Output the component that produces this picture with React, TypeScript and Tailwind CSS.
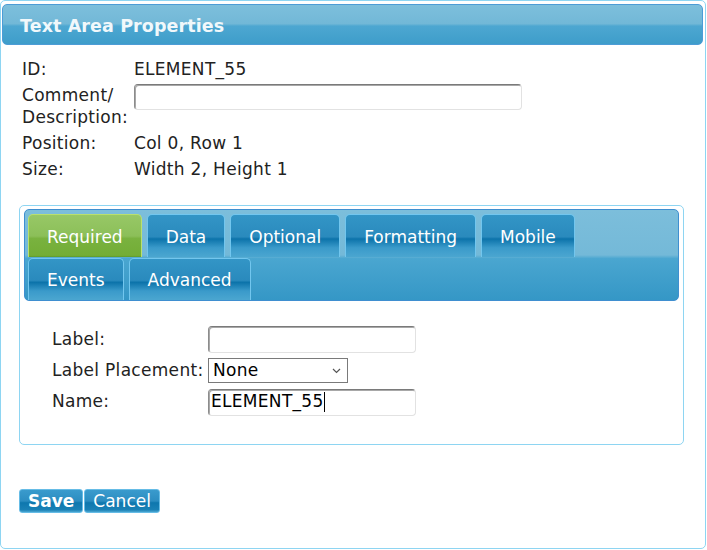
const tabBlue =
  "bg-[linear-gradient(to_bottom,#3395c6_0%,#2a8abd_52%,#0c73aa_57%,#3a9aca_78%,#4ba6d0_100%)] border-[#72c6ee]";
const tabGreen =
  "bg-[linear-gradient(to_bottom,#97c866_0%,#8cbf59_50%,#79b23f_56%,#73ad36_96%,#5e9a29_100%)] border-[#b9e06e]";

const Tab = ({ label, active, h }: { label: string; active?: boolean; h: string }) => (
  <div
    className={`${h} px-[18px] pt-[3px] flex items-center justify-center rounded-t-[5px] border border-b-0 text-white text-[17px] ${
      active ? tabGreen : tabBlue
    }`}
  >
    {label}
  </div>
);

const TextInput = ({ w, h, value }: { w: string; h: string; value?: string }) => (
  <div
    className={`${w} ${h} bg-white rounded-[4px] border border-[#e2e2e2] border-t-[#7a7a7a] border-l-[#8c8c8c] shadow-[inset_1px_1px_0_#a8a8a8] flex items-center pl-[2px] text-[17px] text-black`}
  >
    {value}
    {value && <span className="w-px h-[20px] bg-black" />}
  </div>
);

export default function App() {
  return (
    <div className="w-[707px] h-[550px] bg-white font-['DejaVu_Sans',sans-serif] text-[#222]">
      <div className="w-[706px] h-[549px] border border-[#8ed5f2] rounded-[5px] pt-[3px] pr-[2px] flex flex-col">
        {/* title bar */}
        <div className="ml-px h-[41px] rounded-[5px] border border-[#4d9cd6] bg-[linear-gradient(to_bottom,#7dbfdc_0%,#72b8d7_48%,#4da7d1_54%,#3e9dca_100%)] flex items-center pl-[17px] pt-[3px]">
          <span className="text-[17.5px] font-bold text-[#f1f8fb] tracking-[0.1px]">Text Area Properties</span>
        </div>

        {/* element info */}
        <div className="mt-[11px] pl-[21px] text-[17px] leading-[22px] tracking-[0.3px]">
          <div className="flex py-[2px]">
            <div className="w-[112px]">ID:</div>
            <div>ELEMENT_55</div>
          </div>
          <div className="flex py-[2px]">
            <div className="w-[112px]">
              Comment/
              <br />
              Description:
            </div>
            <TextInput w="w-[388px]" h="h-[26px]" />
          </div>
          <div className="flex py-[2px]">
            <div className="w-[112px]">Position:</div>
            <div>Col 0, Row 1</div>
          </div>
          <div className="flex py-[2px]">
            <div className="w-[112px]">Size:</div>
            <div>Width 2, Height 1</div>
          </div>
        </div>

        {/* tab panel */}
        <div className="mt-[23px] ml-[18px] w-[665px] h-[240px] border border-[#8ed5f2] rounded-[5px] px-[4px] pt-[3px]">
          <div className="h-[92px] rounded-[5px] border border-[#3f8fd0] bg-[linear-gradient(to_bottom,#7cbedb_0%,#74b9d8_50%,#4aa6d0_54%,#3597c6_100%)] pl-[3px] pt-[4px] flex flex-col gap-[1px]">
            <div className="flex gap-[5px]">
              <Tab label="Required" active h="h-[43px]" />
              <Tab label="Data" h="h-[43px]" />
              <Tab label="Optional" h="h-[43px]" />
              <Tab label="Formatting" h="h-[43px]" />
              <Tab label="Mobile" h="h-[43px]" />
            </div>
            <div className="flex gap-[5px]">
              <Tab label="Events" h="h-[42px]" />
              <Tab label="Advanced" h="h-[42px]" />
            </div>
          </div>

          <div className="pl-[28px] pt-[25px] grid grid-cols-[156px_auto] gap-y-[5px] items-center text-[17px] tracking-[0.3px] text-[#222]">
            <div>Label:</div>
            <TextInput w="w-[208px]" h="h-[27px]" />
            <div>Label Placement:</div>
            <div className="w-[140px] h-[25px] border border-[#7a7a7a] bg-white flex items-center justify-between pl-[4px] pr-[6px] text-black">
              <span>None</span>
              <svg width="9" height="6" viewBox="0 0 9 6" fill="none" stroke="#555" strokeWidth="1.2">
                <path d="M1 1l3.5 3.5L8 1" />
              </svg>
            </div>
            <div>Name:</div>
            <TextInput w="w-[208px]" h="h-[27px]" value="ELEMENT_55" />
          </div>
        </div>

        {/* buttons */}
        <div className="mt-[44px] ml-[18px] flex gap-px">
          <button className="h-[24px] px-[8px] rounded-[3px] border border-[#66bce6] bg-[linear-gradient(to_bottom,#3a9bcd_0%,#2c8dc1_50%,#0e77ae_58%,#1a81b6_90%,#4aa5d0_100%)] text-white text-[17px] font-bold leading-none">
            Save
          </button>
          <button className="h-[24px] px-[8px] rounded-[3px] border border-[#66bce6] bg-[linear-gradient(to_bottom,#3a9bcd_0%,#2c8dc1_50%,#0e77ae_58%,#1a81b6_90%,#4aa5d0_100%)] text-white text-[17px] leading-none">
            Cancel
          </button>
        </div>
      </div>
    </div>
  );
}
